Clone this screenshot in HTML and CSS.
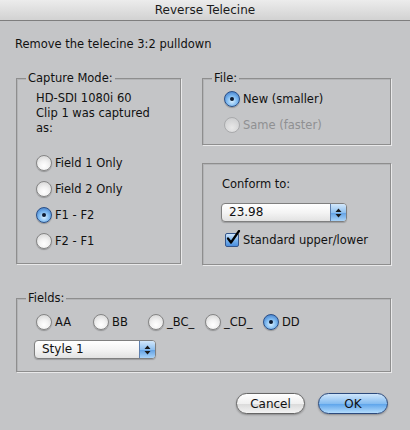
FILE: index.html
```html
<!DOCTYPE html>
<html lang="en">
  <head>
    <meta charset="UTF-8" />
    <meta name="viewport" content="width=device-width, initial-scale=1.0" />
    <title>Reverse Telecine</title>
    <link rel="stylesheet" href="styles.css">
  </head>
  <body>
    <div class="window">
      <div class="titlebar">Reverse Telecine</div>

      <div class="content">
        <p class="intro">Remove the telecine 3:2 pulldown</p>

        <div class="columns">
          <!-- Capture Mode -->
          <div class="group capture">
            <span class="group-label">Capture Mode:</span>
            <p class="info">HD-SDI 1080i 60<br />Clip 1 was captured<br />as:</p>
            <div class="radio-list">
              <div class="radio-row"><span class="radio"></span>Field 1 Only</div>
              <div class="radio-row"><span class="radio"></span>Field 2 Only</div>
              <div class="radio-row"><span class="radio on"></span>F1 - F2</div>
              <div class="radio-row"><span class="radio"></span>F2 - F1</div>
            </div>
          </div>

          <div class="right-col">
            <!-- File -->
            <div class="group file">
              <span class="group-label">File:</span>
              <div class="radio-row"><span class="radio on"></span>New (smaller)</div>
              <div class="radio-row disabled"><span class="radio"></span>Same (faster)</div>
            </div>

            <!-- Conform -->
            <div class="group conform">
              <p class="conform-label">Conform to:</p>
              <div class="popup conform-popup">
                <span class="popup-value">23.98</span>
                <span class="popup-arrows">
                  <svg width="7" height="10" viewBox="0 0 7 10"><path d="M3.5 0.5 L6.5 4 L0.5 4 Z M3.5 9.5 L6.5 6 L0.5 6 Z" fill="#1a1a1a"/></svg>
                </span>
              </div>
              <div class="check-row">
                <span class="checkbox">
                  <svg width="16" height="16" viewBox="0 0 16 16"><path d="M3 8.5 L6 12.5 L14 1" fill="none" stroke="#000" stroke-width="2.2" stroke-linecap="round" stroke-linejoin="round"/></svg>
                </span>
                Standard upper/lower
              </div>
            </div>
          </div>
        </div>

        <!-- Fields -->
        <div class="group fields">
          <span class="group-label">Fields:</span>
          <div class="field-radios">
            <div class="radio-row"><span class="radio"></span>AA</div>
            <div class="radio-row"><span class="radio"></span>BB</div>
            <div class="radio-row"><span class="radio"></span>_BC_</div>
            <div class="radio-row"><span class="radio"></span>_CD_</div>
            <div class="radio-row"><span class="radio on"></span>DD</div>
          </div>
          <div class="popup style-popup">
            <span class="popup-value">Style 1</span>
            <span class="popup-arrows">
              <svg width="7" height="10" viewBox="0 0 7 10"><path d="M3.5 0.5 L6.5 4 L0.5 4 Z M3.5 9.5 L6.5 6 L0.5 6 Z" fill="#1a1a1a"/></svg>
            </span>
          </div>
        </div>

        <div class="buttons">
          <button class="button">Cancel</button>
          <button class="button default">OK</button>
        </div>
      </div>
    </div>
  </body>
</html>
```

FILE: styles.css
```css
* {
  box-sizing: border-box;
  margin: 0;
  padding: 0;
  font-family: "DejaVu Sans", sans-serif;
}
body {
  background: #c4c5c7;
  width: 410px;
  height: 430px;
  overflow: hidden;
  color: #111;
  font-size: 11.5px;
  line-height: 15px;
}
.titlebar {
  height: 21px;
  background: linear-gradient(#ececec, #d2d2d2);
  border-bottom: 1px solid #7e7e7e;
  text-align: center;
  font-size: 12px;
  line-height: 20px;
  color: #1a1a1a;
}
.content {
  padding: 16px 19px 0 16px;
}
.intro {
  margin-left: -1px;
  height: 15px;
}
.columns {
  display: flex;
  gap: 21px;
  margin-top: 26px;
}

/* group boxes */
.group {
  position: relative;
  border: 1px solid #8e8e8e;
  box-shadow: 1px 1px 0 #e9e9ea, inset 1px 1px 0 #b3b4b6;
}
.group-label {
  position: absolute;
  top: -8px;
  left: 9px;
  padding: 0 2px;
  background: #c4c5c7;
  line-height: 15px;
}
.capture {
  width: 165px;
  height: 186px;
  padding: 12px 0 0 19px;
}
.info {
  height: 45px;
}
.radio-list {
  margin-top: 14px;
}
.radio-list .radio-row {
  height: 26px;
}
.radio-row {
  display: flex;
  align-items: center;
  gap: 3px;
  white-space: nowrap;
}
.radio-row.disabled {
  color: #8f9092;
}
.radio {
  width: 16px;
  height: 16px;
  border-radius: 50%;
  border: 1px solid #858585;
  background: radial-gradient(circle at 50% 70%, #ffffff 0%, #f2f2f2 40%, #cfcfcf 100%);
  box-shadow: 0 1px 1px rgba(0, 0, 0, 0.25);
  flex: none;
  position: relative;
}
.radio.on {
  border-color: #2a4f87;
  background: radial-gradient(circle at 50% 65%, #d8efff 0%, #7fbaf0 45%, #2f6cc0 100%);
}
.radio.on::after {
  content: "";
  position: absolute;
  left: 5px;
  top: 5px;
  width: 4px;
  height: 4px;
  border-radius: 50%;
  background: #0d1a30;
}
.disabled .radio {
  border-color: #a9aaac;
  background: radial-gradient(circle at 50% 70%, #e8e8e8, #c8c9cb);
  box-shadow: none;
}

.right-col {
  display: flex;
  flex-direction: column;
  gap: 18px;
  width: 189px;
}
.file {
  height: 67px;
  padding: 7px 0 0 21px;
}
.file .radio-row {
  height: 26px;
}
.conform {
  height: 102px;
  padding: 13px 0 0 19px;
}
.conform-label {
  height: 15px;
}

/* popup menus */
.popup {
  display: flex;
  height: 19px;
  border: 1px solid #7f7f7f;
  border-radius: 4px;
  background: linear-gradient(#ffffff, #f4f4f4 50%, #e2e2e2);
  box-shadow: 0 1px 1px rgba(0, 0, 0, 0.2);
  overflow: hidden;
}
.popup-value {
  flex: 1;
  padding-left: 7px;
  line-height: 17px;
  font-size: 12px;
}
.popup-arrows {
  width: 16px;
  display: flex;
  align-items: center;
  justify-content: center;
  border-left: 1px solid #5d7fae;
  background: linear-gradient(#d3e8fb, #8fc0ef 50%, #5f9fe3 51%, #a9d3f8);
}
.conform-popup {
  width: 126px;
  margin: 11px 0 0 -1px;
}
.check-row {
  display: flex;
  align-items: center;
  gap: 4px;
  height: 18px;
  margin: 9px 0 0 3px;
}
.checkbox {
  position: relative;
  width: 14px;
  height: 14px;
  border: 1px solid #34558a;
  border-radius: 2px;
  background: linear-gradient(#cfe6fb, #76b1ec 55%, #4a8ddc);
  flex: none;
}
.checkbox svg {
  position: absolute;
  left: -1px;
  top: -4px;
}

.fields {
  margin-top: 33px;
  height: 74px;
  padding: 14px 0 0 19px;
}
.field-radios {
  display: grid;
  grid-template-columns: 57px 55px 57px 58px auto;
  height: 18px;
}
.style-popup {
  width: 122px;
  margin: 9px 0 0 -2px;
}

/* buttons */
.buttons {
  display: flex;
  justify-content: flex-end;
  gap: 13px;
  margin-top: 21px;
  padding-right: 3px;
}
.button {
  width: 69px;
  height: 21px;
  border: 1px solid #666;
  border-radius: 11px;
  background: linear-gradient(#ffffff, #f0f0f0 50%, #d9d9d9 51%, #f3f3f3);
  box-shadow: 0 1px 2px rgba(0, 0, 0, 0.3);
  font-size: 12px;
  color: #111;
}
.button.default {
  width: 70px;
  border-color: #2c4a7c;
  background: linear-gradient(#cfe6fb, #86bdf1 50%, #5aa2ea 51%, #b4dcfc);
}
```
